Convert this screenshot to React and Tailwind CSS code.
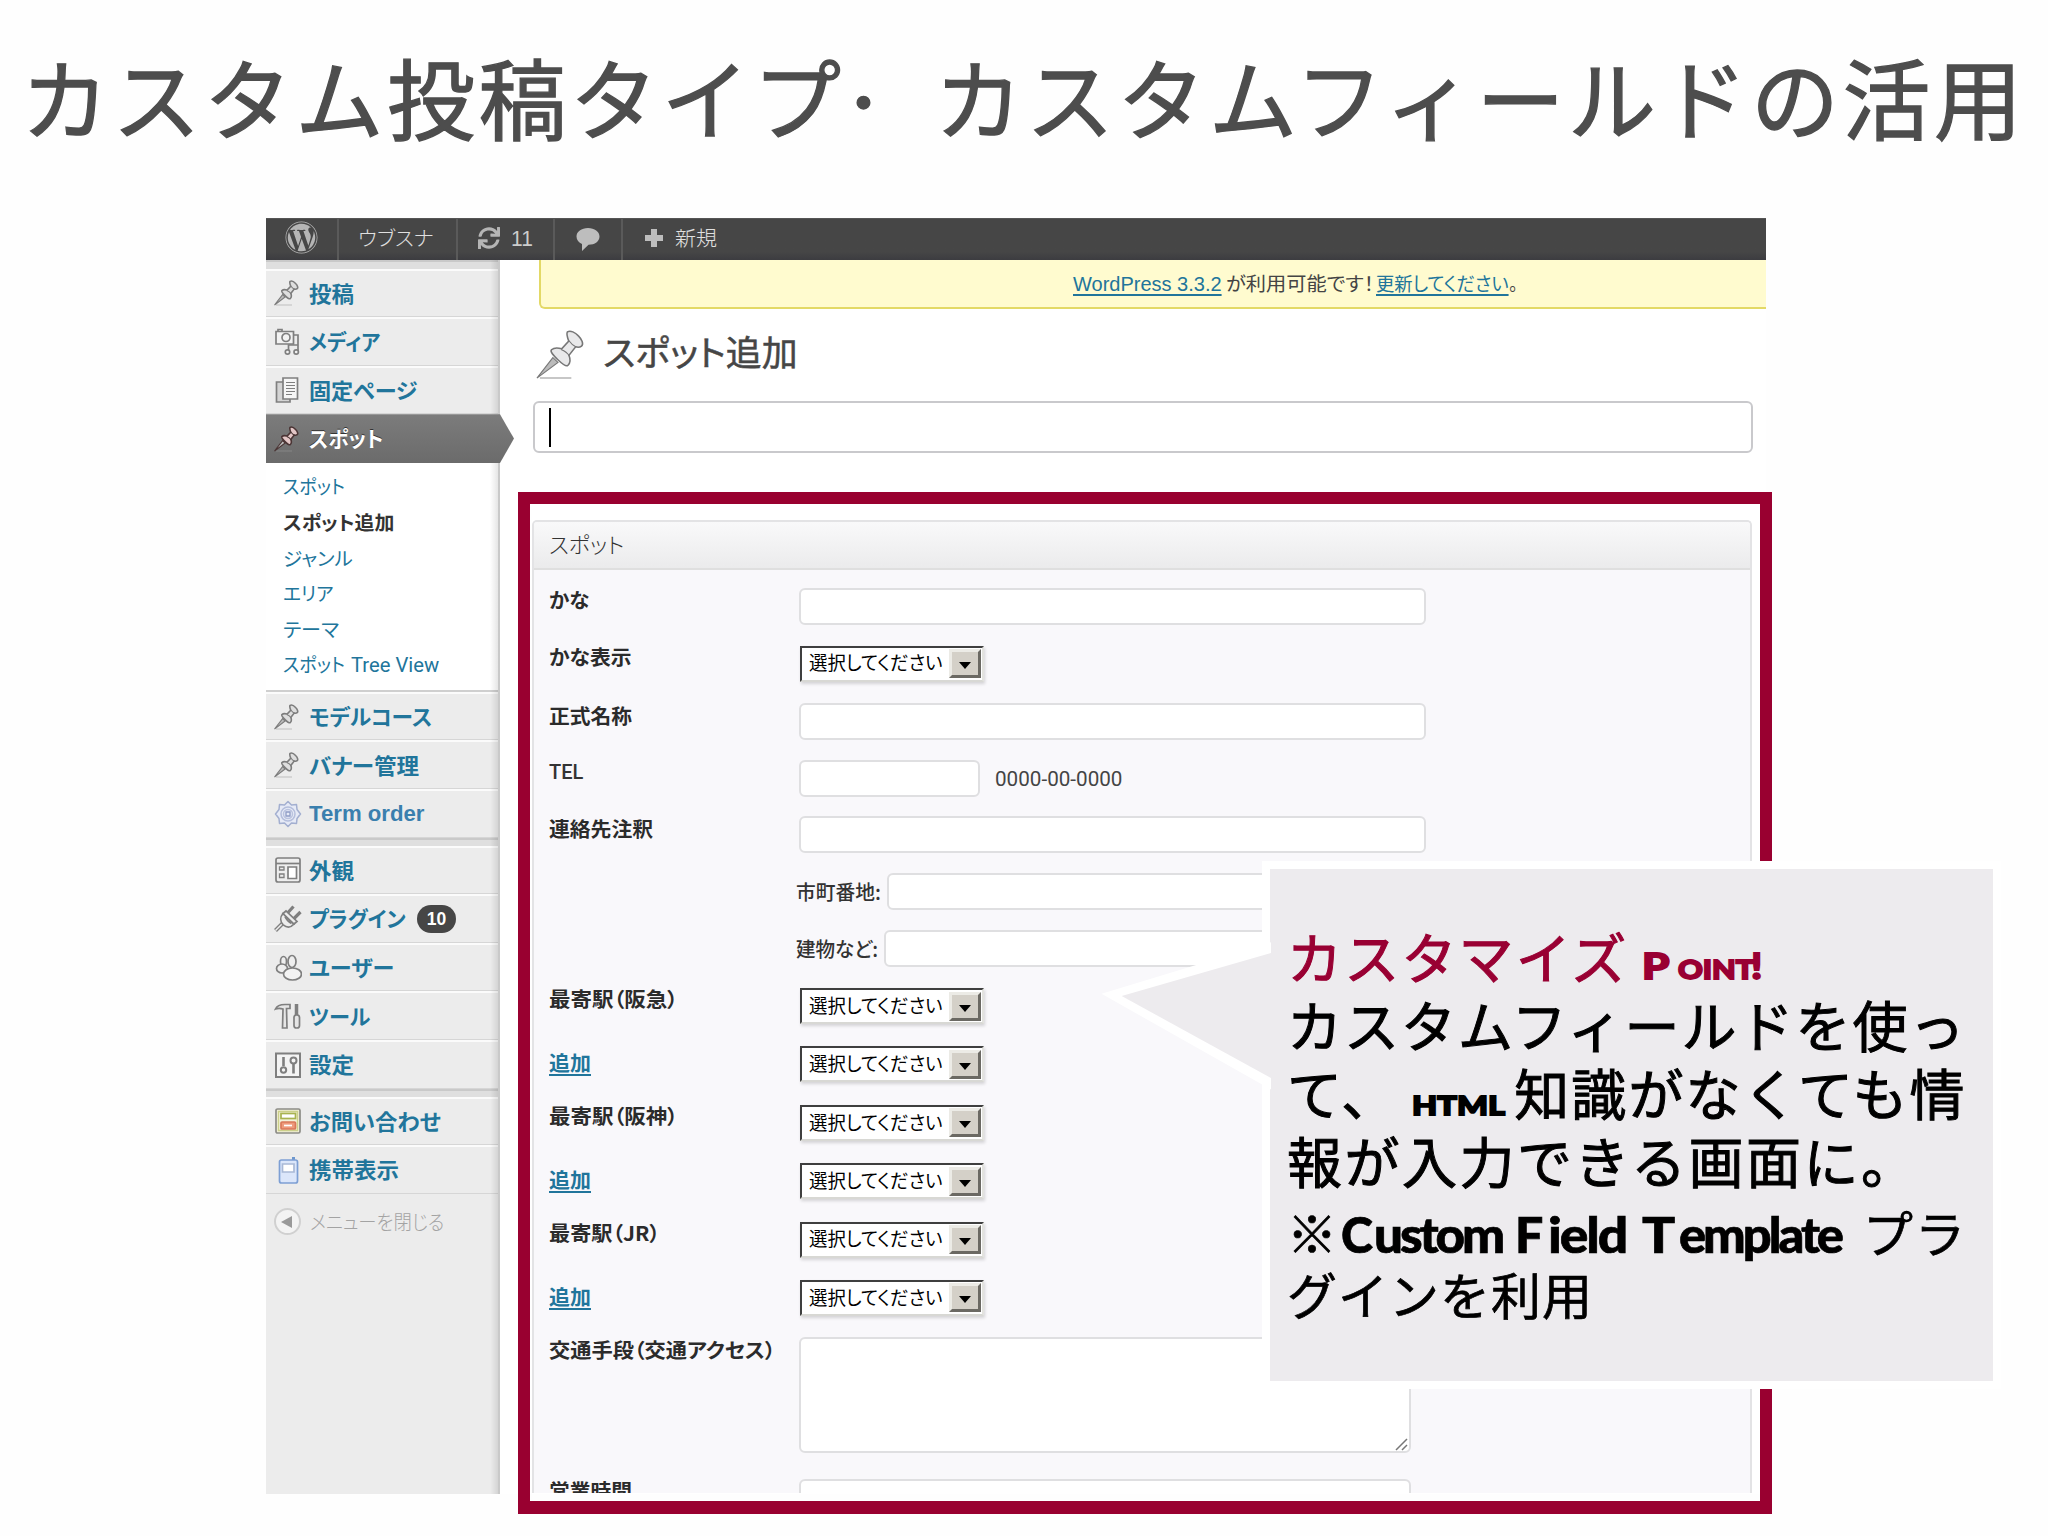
import { useLayoutEffect, useRef, useState } from "react";
import { FaWordpress, FaSync } from "react-icons/fa";

// Condenses or widens one run of text so that it fills the given width.
function Fit({ w, className = "", inner = "", children }) {
  const ref = useRef(null);
  const [scale, setScale] = useState(1);
  useLayoutEffect(() => {
    setScale(w / ref.current.offsetWidth);
  }, [w]);
  return (
    <span className={"inline-block whitespace-nowrap " + className} style={{ width: w }}>
      <span ref={ref} className={"inline-block origin-left whitespace-pre " + inner} style={{ transform: `scaleX(${scale})` }}>
        {children}
      </span>
    </span>
  );
}

const PIN =
  "M17 2.5c1.5-1 4 .3 5.6 2 1.8 1.8 2.8 4.2 1.6 5.2-1 .8-2.3.6-3 .4l-3.4 4.3c.8 2 .8 4-.6 5.2-.9.8-2.6-.6-4.9-2.8S8 12.6 8.9 11.6c1.4-1.3 3.3-1.1 5.2-.5l3.6-3.9c-.6-1.6-1.3-3.8-.7-4.7z";

function Pin({ fill = "#dedede", stroke = "#7d7d7d", className = "-ml-[3px] size-[28px]", sw = 1.6 }) {
  return (
    <svg viewBox="0 0 28 28" className={className}>
      <path d="M3 26h16" stroke="#999" strokeOpacity=".55" strokeWidth="1" />
      <path d="M1.5 26 9.6 15.6l2.6 2.4z" fill="#bbb" stroke={stroke} strokeWidth={sw * 0.7} />
      <path d={PIN} fill={fill} stroke={stroke} strokeWidth={sw} />
      <path d="M13.8 11.4c2 .8 3.4 2 4.2 3.3M17.8 7c1 1.4 2.2 2.5 3.6 3.2" fill="none" stroke={stroke} strokeWidth={sw * 0.7} />
    </svg>
  );
}

function Svg({ children }) {
  return (
    <svg viewBox="0 0 28 28" className="size-[28px]" fill="none" stroke="#7f7f7f" strokeWidth="1.7">
      {children}
    </svg>
  );
}

const icons = {
  pin: <Pin />,
  pinActive: <Pin fill="#e3c6c6" stroke="#4b3535" />,
  media: (
    <Svg>
      <path d="M2 3.500h17.500v12.500H2z" fill="#f2f2f2" />
      <path d="M4 3.500V1.500h4v2" />
      <circle cx="12" cy="9.500" r="4" />
      <path d="M20 7h4v17M14.500 24v-7h9.500" />
      <circle cx="13.500" cy="24" r="2.200" fill="#f2f2f2" />
      <circle cx="22.200" cy="24" r="2.200" fill="#f2f2f2" />
    </Svg>
  ),
  pages: (
    <Svg>
      <path d="M2.500 6H16v20H2.500z" fill="#d4d4d4" />
      <path d="M9 2h14.500v21H9z" fill="#f6f6f6" />
      <path d="M12 6.500h9M12 9.500h9M12 12.500h9M12 15.500h9M12 18.500h6" strokeWidth="1" />
    </Svg>
  ),
  gear: (
    <Svg>
      <path
        d="M14 1.500 17.500 5l5-.5.5 5 3.500 4.500-3.500 4.500-.5 5-5-.5L14 26.500 10.500 23l-5 .5-.5-5L1.500 14 5 9.500l.5-5 5 .5z"
        fill="#e6eaf6"
        stroke="#a3afd0"
        strokeWidth="1.500"
        strokeLinejoin="round"
      />
      <circle cx="14" cy="14" r="7" stroke="#b4bedc" strokeWidth="1.500" />
      <circle cx="14" cy="14" r="4.500" stroke="#bac3df" strokeWidth="1.500" />
      <path d="M12 12h4v4h-4z" stroke="#8f9cc6" strokeWidth="1.300" />
    </Svg>
  ),
  appearance: (
    <Svg>
      <rect x="2" y="2" width="24" height="24" rx="2" fill="#eee" />
      <path d="M2 7.500h24" />
      <path d="M5.500 11h4.500v3H5.500zM5.500 18h4.500v3.500H5.500z" strokeWidth="1.300" />
      <path d="M14 11h8.500v11.500H14z" fill="#fff" />
    </Svg>
  ),
  plugin: (
    <Svg>
      <path d="m1.500 25.500 6.500-6.500" strokeWidth="4" />
      <path d="m1.500 25.500 6.500-6.500" stroke="#eee" strokeWidth="1.400" />
      <path d="M9 8.500 20 19c-3.500 4-7.500 3.500-10.800.8C6 16.500 6 12 9 8.500z" fill="#ededed" />
      <path d="m9 8.500 3-2.500 11 10.500-3 2.500z" fill="#ededed" />
      <path d="m14 7.500 5.500-6M20 13.500l6.500-6.500" strokeWidth="3.200" />
      <path d="M11 11.500c2 4 3.500 5.500 6.500 7" />
    </Svg>
  ),
  users: (
    <Svg>
      <ellipse cx="9.500" cy="7.500" rx="3" ry="5" fill="#eee" />
      <ellipse cx="8" cy="14.500" rx="5.500" ry="4.500" fill="#eee" />
      <ellipse cx="18" cy="7.500" rx="4" ry="6" fill="#eee" />
      <ellipse cx="18.500" cy="20" rx="9" ry="6" fill="#f3f3f3" />
    </Svg>
  ),
  tools: (
    <Svg>
      <path d="M1.500 7C3 3.500 7 2.500 11 2.500h5v4h-3.500L13 26H8.500L9 7C6 6 4 6 1.500 7z" fill="#e6e6e6" />
      <path d="M22.500 2v12" strokeWidth="3.500" />
      <rect x="20" y="13" width="5.500" height="13" rx="2.500" fill="#e6e6e6" />
    </Svg>
  ),
  settings: (
    <Svg>
      <path d="M2 2.500h24v23.500H2z" fill="#f4f4f4" strokeWidth="2" />
      <path d="M9.500 6v9M19.500 22.500V13" strokeWidth="2.600" />
      <circle cx="9.500" cy="19" r="2.700" strokeWidth="2" />
      <circle cx="19.500" cy="9.500" r="3" strokeWidth="2" />
    </Svg>
  ),
  contact: (
    <Svg>
      <rect x="2" y="2" width="24" height="24" rx="1.500" fill="#f3f1da" stroke="#8c8c86" />
      <path d="M4.500 4.500h19v19h-19z" stroke="#ccd08a" strokeWidth="1.400" />
      <rect x="7" y="6.500" width="14.500" height="5" fill="#fff" stroke="#a8b350" />
      <rect x="7" y="15" width="14.500" height="7" rx="1" fill="#ee9a7c" stroke="#d9785a" />
      <path d="M10 18.500h8" stroke="#fff" />
    </Svg>
  ),
  mobile: (
    <Svg>
      <path d="M19.500 1v5" stroke="#6d97cd" strokeWidth="3" />
      <rect x="5.500" y="4" width="18" height="23" rx="2" fill="#dbe6fa" stroke="#7d9fd4" />
      <path d="M8.500 8h11.500v8H8.500z" fill="#fff" stroke="#a9b9d6" />
    </Svg>
  ),
};

const top = [
  ["pin", "投稿", 45],
  ["media", "メディア", 71],
  ["pages", "固定ページ", 109],
];
const submenu = [
  ["スポット", 62],
  ["スポット追加", 111, true],
  ["ジャンル", 70],
  ["エリア", 51],
  ["テーマ", 56],
];
const groupA = [
  ["pin", "モデルコース", 123],
  ["pin", "バナー管理", 110],
  ["gear", "Term order", 116],
];
const groupB = [
  ["appearance", "外観", 45],
  ["plugin", "プラグイン", 97, "10"],
  ["users", "ユーザー", 85],
  ["tools", "ツール", 61],
  ["settings", "設定", 45],
];
const groupC = [
  ["contact", "お問い合わせ", 132],
  ["mobile", "携帯表示", 90],
];

function MenuRow({ item }) {
  const [icon, label, w, badge] = item;
  const latin = icon === "gear";
  return (
    <div className="flex h-[48.600px] items-center border-t-2 border-b border-t-[#fbfbfb] border-b-[#d6d6d6] pl-[8px]">
      <span className="mr-[7px] flex w-[28px] justify-center">{icons[icon]}</span>
      <Fit w={w} className={latin ? "font-['Liberation_Sans'] text-[22px] font-bold text-[#3a7fae]" : "-mt-px text-[21.500px] font-bold text-[#21759b]"}>
        {label}
      </Fit>
      {badge && (
        <span className="ml-[11px] flex h-[28px] w-[39px] items-center justify-center rounded-full bg-[#464646] font-['Liberation_Sans'] text-[17.500px] font-bold text-white">
          {badge}
        </span>
      )}
    </div>
  );
}

function MenuGap({ className = "h-[8px]" }) {
  return <div className={"border-t-2 border-[#c9c9c9] bg-[#dfdfdf] " + className} />;
}

function Sidebar() {
  return (
    <nav className="relative flex h-[1234px] w-[234px] flex-col bg-[#ececec] text-[#21759b]">
      <MenuGap className="h-[8.500px]" />
      {top.map((t) => (
        <MenuRow key={t[1]} item={t} />
      ))}
      <div className="relative z-20 flex h-[48.600px] w-[248px] items-center bg-linear-to-b from-[#7c7c7c] to-[#6b6b6b] pl-[8px] [clip-path:polygon(0_0,234px_0,248px_50%,234px_100%,0_100%)]">
        <span className="mr-[7px] flex w-[28px] justify-center">{icons.pinActive}</span>
        <Fit w={74} className="text-[21.500px] font-bold text-white [text-shadow:0_-1px_0_#333]">
          スポット
        </Fit>
      </div>
      <div className="flex h-[227px] flex-col bg-white pt-[6px] pl-[17px] text-[19px]">
        {submenu.map(([label, w, on]) => (
          <div key={label} className="flex h-[35.600px] items-center">
            <Fit w={w} className={on ? "font-bold text-[#333]" : ""}>
              {label}
            </Fit>
          </div>
        ))}
        <div className="flex h-[35.600px] items-center gap-[6px]">
          <Fit w={62}>スポット</Fit>
          <Fit w={88} className="font-[Roboto] text-[20px]">
            Tree View
          </Fit>
        </div>
      </div>
      <div className="border-t-2 border-[#cfcfcf]" />
      {groupA.map((t) => (
        <MenuRow key={t[1]} item={t} />
      ))}
      <MenuGap />
      {groupB.map((t) => (
        <MenuRow key={t[1]} item={t} />
      ))}
      <MenuGap />
      {groupC.map((t) => (
        <MenuRow key={t[1]} item={t} />
      ))}
      <div className="flex h-[56px] items-center pl-[8px] text-[#a3a3a3]">
        <span className="mr-[9px] flex size-[27px] items-center justify-center rounded-full border-2 border-[#d0d0d0] bg-[#f3f3f3]">
          <svg viewBox="0 0 12 12" className="mr-[2px] size-[12px]">
            <path d="M11 0v12L0 6z" fill="#999" />
          </svg>
        </span>
        <Fit w={134} className="text-[20px] font-light">
          メニューを閉じる
        </Fit>
      </div>
      <div className="absolute inset-y-0 right-0 z-10 w-[10px] border-r-2 border-[#c9c9c9] bg-linear-to-r from-transparent to-black/10" />
    </nav>
  );
}

function AdminBar() {
  return (
    <div className="flex h-[42px] shrink-0 items-stretch border-t border-[#555] bg-linear-to-b from-[#464646] from-80% to-[#3c3c40] text-[#ccc]">
      <div className="flex w-[73px] items-center justify-center border-r-2 border-[#5a5a5a]">
        <FaWordpress className="mb-[4px] size-[33px] text-[#b5b5b5]" />
      </div>
      <div className="flex w-[119px] items-center border-r-2 border-[#5a5a5a] pl-[19px]">
        <Fit w={76} className="pb-[4px] text-[20px] font-light text-[#e0e0e0]">
          ウブスナ
        </Fit>
      </div>
      <div className="flex w-[97px] items-center border-r-2 border-[#5a5a5a] pl-[20px]">
        <FaSync className="mb-[4px] size-[22px] text-[#b5b5b5]" />
        <Fit w={22} className="ml-[11px] pb-[3px] font-['Liberation_Sans'] text-[22px]">
          11
        </Fit>
      </div>
      <div className="flex w-[68px] items-center justify-center border-r-2 border-[#5a5a5a]">
        <svg viewBox="0 0 24 24" className="mb-[1px] size-[24px]" fill="#bdbdbd">
          <path d="M12 1C5.500 1 .5 4.600.5 9.500c0 3.400 2.300 6 5.500 7.400V24l6.500-6.200C19 17.700 23.500 14.300 23.500 9.500 23.500 4.600 18.500 1 12 1z" />
        </svg>
      </div>
      <div className="flex items-center pl-[22px]">
        <svg viewBox="0 0 18 18" className="mb-[4px] size-[18px]" fill="#bdbdbd">
          <path d="M6 0h6v6h6v6h-6v6H6v-6H0V6h6z" />
        </svg>
        <Fit w={42} className="ml-[12px] pb-[4px] text-[20.500px] font-light text-[#e0e0e0]">
          新規
        </Fit>
      </div>
    </div>
  );
}

function Input({ className = "w-[627px]" }) {
  return <div className={"h-[37px] rounded-[6px] border-2 border-[#dfdfe1] bg-white " + className} />;
}

function Select() {
  return (
    <div className="ml-[1px] flex h-[36px] w-[184px] items-center border-2 border-t-[#3f3f3f] border-r-[#e3e3df] border-b-[#d8d8d4] border-l-[#3f3f3f] bg-white pl-[7px] shadow-[1px_2px_3px_rgba(0,0,0,0.15)]">
      <Fit w={134} className="-mt-[2px] text-[19px] text-black">
        選択してください
      </Fit>
      <div className="ml-[6px] flex h-[29px] w-[32px] items-center justify-center border-[3px] border-t-[#ecebe6] border-r-[#6b6963] border-b-[#6b6963] border-l-[#ecebe6] bg-[#d4d0c8]">
        <svg viewBox="0 0 12 7" className="mt-[4px] h-[7px] w-[12px]">
          <path d="M0 0h12L6 7z" fill="#000" />
        </svg>
      </div>
    </div>
  );
}

// h: distance to the next row; off: how far the label sits below the row's top.
function Row({ h, off = 0, label, w, link, thin, children }) {
  return (
    <div className="flex shrink-0 items-start" style={{ height: h }}>
      <div className="w-[267px] shrink-0 pl-[17px]">
        {label && (
          <div className="h-[24px] leading-[24px]" style={{ marginTop: off }}>
            <Fit
              w={w}
              inner={link ? "underline decoration-2 underline-offset-[3px]" : ""}
              className={"text-[20px] " + (link ? "font-bold text-[#21759b]" : thin ? "font-[Roboto] font-medium text-[#333]" : "font-bold text-[#2b2b2b]")}
            >
              {label}
            </Fit>
          </div>
        )}
      </div>
      {children}
    </div>
  );
}

function MetaBox() {
  return (
    <section className="ml-[32px] flex h-[973px] w-[1220px] flex-col overflow-hidden rounded-t-[5px] border-x-2 border-t-2 border-[#e3e3e5] bg-[#f9f8fb]">
      <div className="flex h-[48px] shrink-0 items-center border-b-2 border-[#dfdfdf] bg-linear-to-b from-[#f9f9fa] to-[#ebebec] pl-[15px]">
        <Fit w={75} className="pb-[3px] text-[22px] font-light text-[#333]">
          スポット
        </Fit>
      </div>
      <div className="-ml-[2px] flex flex-col pt-[18px]">
        <Row h={57.5} off={0} label="かな" w={40}><Input /></Row>
        <Row h={57.5} off={-1} label="かな表示" w={82}><Select /></Row>
        <Row h={57} off={1} label="正式名称" w={83}><Input /></Row>
        <Row h={56} off={0} label="TEL" w={34} thin>
          <Input className="w-[181px]" />
          <Fit w={127} className="mt-[4px] ml-[15px] font-[Roboto] text-[20px] text-[#444]">
            0000-00-0000
          </Fit>
        </Row>
        <Row h={57} off={1} label="連絡先注釈" w={104}><Input /></Row>
        <Row h={57}>
          <Fit w={85} className="-ml-[3px] mt-[4px] mr-[6px] text-[20px] font-medium text-[#333]">市町番地:</Fit>
          <Input />
        </Row>
        <Row h={58}>
          <Fit w={82} className="-ml-[3px] mt-[4px] mr-[6px] text-[20px] font-medium text-[#333]">建物など:</Fit>
          <Input />
        </Row>
        <Row h={58.400} off={-1} label="最寄駅（阪急）" w={129}><Select /></Row>
        <Row h={58.400} off={5} label="追加" w={42} link><Select /></Row>
        <Row h={58.400} off={-1} label="最寄駅（阪神）" w={129}><Select /></Row>
        <Row h={58.400} off={5} label="追加" w={42} link><Select /></Row>
        <Row h={58.400} off={-1} label="最寄駅（JR）" w={111}><Select /></Row>
        <Row h={57} off={5} label="追加" w={42} link><Select /></Row>
        <Row h={142.500} off={1} label="交通手段（交通アクセス）" w={227}>
          <div className="flex h-[116.500px] w-[612px] items-end justify-end rounded-[6px] border-2 border-[#dfdfe1] bg-white">
            <svg viewBox="0 0 14 14" className="size-[14px]" stroke="#777" strokeWidth="1.500">
              <path d="M1 13 12 2M7 13l5-5" />
            </svg>
          </div>
        </Row>
        <Row h={60} off={0} label="営業時間" w={83}><Input className="w-[612px]" /></Row>
      </div>
    </section>
  );
}

function Main() {
  const underline = "underline decoration-2 underline-offset-[3px]";
  return (
    <main className="flex w-[1266px] flex-col">
      <div className="ml-[39px] flex h-[49px] items-center rounded-bl-[6px] border-b-2 border-l-2 border-[#e3d966] bg-[#fffbcf] pl-[532px] text-[19px] text-[#444]">
        <Fit w={149} className="font-['Liberation_Sans'] text-[20px] text-[#21759b]" inner={underline}>WordPress 3.3.2</Fit>
        <Fit w={148} className="ml-[4px]">が利用可能です！</Fit>
        <Fit w={133} className="ml-[2px] text-[#21759b]" inner={underline}>更新してください</Fit>
        <Fit w={9}>。</Fit>
      </div>
      <div className="mt-[16px] ml-[34px] flex h-[56px] items-center">
        <Pin className="mt-[3px] size-[55px]" sw={0.8} stroke="#777" fill="#e9e9ea" />
        <Fit w={195} className="-mt-[5px] ml-[14px] text-[35px] leading-[50px] text-[#464646] [-webkit-text-stroke:0.500px]">
          スポット追加
        </Fit>
      </div>
      <div className="mt-[20px] ml-[33px] flex h-[52px] w-[1220px] items-center rounded-[6px] border-2 border-[#c9c9cc] bg-white pl-[14px]">
        <div className="h-[39px] w-[2px] bg-black" />
      </div>
      <div className="h-[67px]" />
      <MetaBox />
    </main>
  );
}

function Callout() {
  const heavy = "[-webkit-text-stroke:1.800px]";
  return (
    <aside className="absolute top-[861px] left-[1262px] h-[528px] w-[739px] border-[8.500px] border-white bg-[#edebee] pt-[52px] pl-[17px] text-black">
      <svg viewBox="0 0 180 160" className="absolute top-[65px] -left-[177px] h-[160px] w-[178px]" preserveAspectRatio="none">
        <path d="M190 13.500 29 62l161 90" fill="none" stroke="#fff" strokeWidth="16" />
        <path d="M180 19 29 62l151 82z" fill="#edebee" />
      </svg>
      <div className="text-[55px] leading-[68px] whitespace-nowrap [-webkit-text-stroke:1px]">
        <div className="h-[68px] text-[#990033]">
          <span className="tracking-[2.200px]">カスタマイズ</span>
          <span className={"font-[Lato] font-black " + heavy}>
            <Fit w={28} className="ml-[13px] text-[36px]">P</Fit>
            <Fit w={76} className="ml-[8px] text-[27px]" inner="uppercase">oint</Fit>
            <Fit w={11} className="-ml-[3px] text-[36px]">!</Fit>
          </span>
        </div>
        <div className="h-[68px] tracking-[2px]">カスタムフィールドを使っ</div>
        <div className="h-[68px]">
          <span className="tracking-[2px]">て、</span>
          <Fit w={93} className={"mr-[9px] ml-[14px] font-[Lato] text-[27px] font-black " + heavy} inner="uppercase">html</Fit>
          <span className="tracking-[2.100px]">知識がなくても情</span>
        </div>
        <div className="h-[68px] tracking-[2.500px]">報が入力できる画面に。</div>
      </div>
      <div className="text-[50px] leading-[60px] whitespace-nowrap [-webkit-text-stroke:0.700px]">
        <div className="mt-[8px] h-[60px]">
          <span>※</span>
          <span className="font-[Lato] font-black">
            <Fit w={32} className="ml-[4px]">C</Fit>
            <Fit w={128} className="ml-[1px]" inner="tracking-[-3px]">ustom</Fit>
            <Fit w={28} className="ml-[13px]">F</Fit>
            <Fit w={78} className="ml-[5px]" inner="tracking-[-2px]">ield</Fit>
            <Fit w={33} className="ml-[16px]">T</Fit>
            <Fit w={162} className="ml-[4px]" inner="tracking-[-3px]">emplate</Fit>
          </span>
          <span className="ml-[22px] tracking-[2px]">プラ</span>
        </div>
        <div className="mt-[2px] h-[60px] tracking-[1px]">グインを利用</div>
      </div>
    </aside>
  );
}

export default function App() {
  return (
    <div className="relative flex h-[1536px] w-[2048px] flex-col overflow-hidden bg-[#fefefe] font-['Noto_Sans_CJK_JP',sans-serif]">
      <h1 className="h-[218px] pt-[30px] pl-[21px] text-[88px] leading-[130px] tracking-[3.500px] whitespace-nowrap text-[#4d4d4d] [-webkit-text-stroke:1.300px]">
        カスタム投稿タイプ
        <span className="relative -top-[7px] -left-[11px] inline-block w-[90px] text-[60px] leading-none">・</span>
        カスタムフィールドの活用
      </h1>
      <div className="ml-[266px] flex h-[1276px] w-[1500px] flex-col overflow-hidden bg-white leading-normal [font-feature-settings:'palt']">
        <AdminBar />
        <div className="flex">
          <Sidebar />
          <Main />
        </div>
      </div>
      <div className="absolute top-[492px] left-[518px] h-[1022px] w-[1254px] border-x-[12.500px] border-t-[12px] border-b-[13px] border-[#990030]" />
      <Callout />
    </div>
  );
}
